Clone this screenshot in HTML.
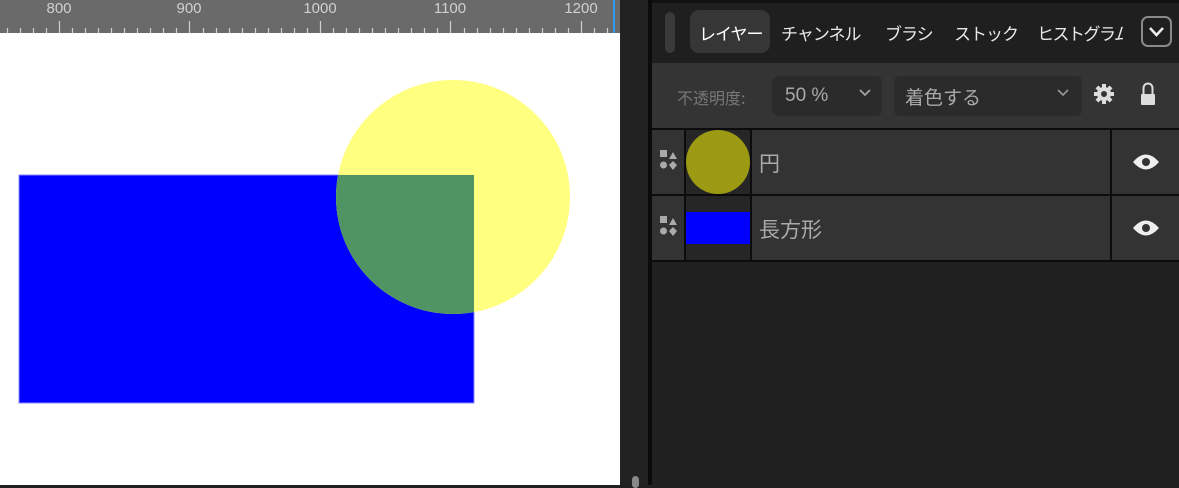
<!DOCTYPE html>
<html><head><meta charset="utf-8"><style>
*{margin:0;padding:0;box-sizing:border-box}
body{width:1179px;height:485px;overflow:hidden;background:#202020;position:relative;font-family:"Liberation Sans","Noto Sans CJK JP",sans-serif}
.a{position:absolute}
.jp{font-family:"Noto Sans CJK JP",sans-serif}
</style></head><body>
<div class="a" style="left:0;top:0;width:620px;height:485px;background:#fff"></div>
<div class="a" style="left:0;top:0;width:620px;height:33px;background:#6a6a6a"></div>
<svg class="a" style="left:0;top:0" width="620" height="33">
<g fill="#d0d0d0" font-size="15" text-anchor="middle" font-family="Liberation Sans">
<text x="59" y="13">800</text><text x="189" y="13">900</text><text x="320" y="13">1000</text><text x="450" y="13">1100</text><text x="581" y="13">1200</text></g>
<path stroke="#d0d0d0" stroke-width="1.2" fill="none" d="M7.5 28V33M20.5 28V33M33.5 28V33M46.5 28V33M59.5 21V33M72.5 28V33M85.5 28V33M98.5 28V33M111.5 28V33M124.5 28V33M137.5 28V33M150.5 28V33M163.5 28V33M176.5 28V33M189.5 21V33M203.5 28V33M216.5 28V33M229.5 28V33M242.5 28V33M255.5 28V33M268.5 28V33M281.5 28V33M294.5 28V33M307.5 28V33M320.5 21V33M333.5 28V33M346.5 28V33M359.5 28V33M372.5 28V33M385.5 28V33M398.5 28V33M411.5 28V33M424.5 28V33M437.5 28V33M450.5 21V33M464.5 28V33M477.5 28V33M490.5 28V33M503.5 28V33M516.5 28V33M529.5 28V33M542.5 28V33M555.5 28V33M568.5 28V33M581.5 21V33M594.5 28V33M607.5 28V33"/>
<rect x="613" y="0" width="2" height="33" fill="#2e9af0"/>
</svg>
<svg class="a" style="left:0;top:33px" width="620" height="452">
<defs><clipPath id="c"><rect x="19" y="142" width="455" height="228"/></clipPath></defs>
<rect x="19" y="142" width="455" height="228" fill="#0000ff" stroke="#8888ff" stroke-width="1"/>
<circle cx="453" cy="164" r="117" fill="#ffff80"/>
<circle cx="453" cy="164" r="117" fill="#4f9462" clip-path="url(#c)"/>
</svg>
<div class="a" style="left:620px;top:0;width:28px;height:485px;background:#222"></div>
<div class="a" style="left:648px;top:0;width:4px;height:485px;background:#0b0b0b"></div>
<div class="a" style="left:632px;top:476px;width:7px;height:12px;border-radius:4px;background:#888"></div>
<div class="a" style="left:652px;top:0;width:527px;height:3px;background:#111"></div>
<div class="a" style="left:652px;top:3px;width:527px;height:60px;background:#1f1f1f"></div>
<div class="a" style="left:665px;top:12px;width:10px;height:41px;border-radius:5px;background:#3a3a3a"></div>
<div class="a" style="left:690px;top:10px;width:80px;height:43px;border-radius:9px;background:#363636"></div>
<div class="a jp" style="left:699px;top:20px;font-size:17px;color:#fff;letter-spacing:-1px">レイヤー</div>
<div class="a jp" style="left:781px;top:20px;font-size:17px;color:#e8e8e8;letter-spacing:-1px;white-space:nowrap">チャンネル</div>
<div class="a jp" style="left:885px;top:20px;font-size:17px;color:#e8e8e8;letter-spacing:-1px">ブラシ</div>
<div class="a jp" style="left:954px;top:20px;font-size:17px;color:#e8e8e8;letter-spacing:-1px">ストック</div>
<div class="a jp" style="left:1037px;top:20px;font-size:17px;color:#e8e8e8;letter-spacing:-1.5px;width:86px;overflow:hidden;white-space:nowrap">ヒストグラム</div>
<div class="a" style="left:1141px;top:16px;width:31px;height:31px;border:2px solid #8a8a8a;border-radius:7px;background:#1f1f1f"></div>
<svg class="a" style="left:1141px;top:16px" width="31" height="31"><path d="M9 12 L15.5 19 L22 12" fill="none" stroke="#eee" stroke-width="2.5"/></svg>
<div class="a" style="left:652px;top:63px;width:527px;height:65px;background:#343434"></div>
<div class="a jp" style="left:677px;top:85px;font-size:16px;color:#777">不透明度:</div>
<div class="a" style="left:772px;top:76px;width:110px;height:40px;border-radius:6px;background:#2b2b2b"></div>
<div class="a" style="left:785px;top:85px;font-size:19px;color:#aaa">50 %</div>
<svg class="a" style="left:858px;top:88px" width="14" height="10"><path d="M2 2 L7 7 L12 2" fill="none" stroke="#aaa" stroke-width="1.6"/></svg>
<div class="a" style="left:894px;top:76px;width:188px;height:40px;border-radius:6px;background:#2b2b2b"></div>
<div class="a jp" style="left:905px;top:83px;font-size:19px;color:#aaa">着色する</div>
<svg class="a" style="left:1056px;top:88px" width="14" height="10"><path d="M2 2 L7 7 L12 2" fill="none" stroke="#999" stroke-width="1.6"/></svg>
<svg class="a" style="left:1093px;top:83px" width="22" height="22" viewBox="0 0 22 22"><g fill="#ddd"><circle cx="11" cy="11" r="7"/><g id="tt"><rect x="9" y="1" width="4" height="5"/><rect x="9" y="16" width="4" height="5"/><rect x="1" y="9" width="5" height="4"/><rect x="16" y="9" width="5" height="4"/></g><use href="#tt" transform="rotate(45 11 11)"/></g><circle cx="11" cy="11" r="3" fill="#343434"/></svg>
<svg class="a" style="left:1139px;top:81px" width="18" height="26"><path d="M4.5 13 V7 A4.5 4.5 0 0 1 13.5 7 V13" fill="none" stroke="#ddd" stroke-width="2"/><rect x="2" y="13" width="14" height="11" rx="1" fill="#ddd"/></svg>
<div class="a" style="left:652px;top:128px;width:527px;height:134px;background:#0c0c0c"></div>
<div class="a" style="left:652px;top:130px;width:32px;height:64px;background:#333"></div>
<div class="a" style="left:686px;top:130px;width:64px;height:64px;background:#262626"></div>
<div class="a" style="left:752px;top:130px;width:358px;height:64px;background:#333"></div>
<div class="a" style="left:1112px;top:130px;width:67px;height:64px;background:#333"></div>
<div class="a" style="left:652px;top:196px;width:32px;height:64px;background:#333"></div>
<div class="a" style="left:686px;top:196px;width:64px;height:64px;background:#262626"></div>
<div class="a" style="left:752px;top:196px;width:358px;height:64px;background:#333"></div>
<div class="a" style="left:1112px;top:196px;width:67px;height:64px;background:#333"></div>
<div class="a" style="left:686px;top:130px;width:64px;height:64px;border-radius:50%;background:#9c9a12"></div>
<div class="a" style="left:686px;top:212px;width:64px;height:32px;background:#0000ff"></div>
<div class="a jp" style="left:759px;top:148px;font-size:21px;color:#aaa">円</div>
<div class="a jp" style="left:759px;top:214px;font-size:21px;color:#aaa">長方形</div>
<svg class="a" style="left:659px;top:150px" width="20" height="24"><g fill="#aaa"><rect x="1" y="0" width="7" height="7"/><path d="M14 2 L18 9 L10 9Z"/><circle cx="4.5" cy="15" r="3.5"/><path d="M14 11 L18 15 L14 20 L10 15Z"/></g></svg>
<svg class="a" style="left:659px;top:216px" width="20" height="24"><g fill="#aaa"><rect x="1" y="0" width="7" height="7"/><path d="M14 2 L18 9 L10 9Z"/><circle cx="4.5" cy="15" r="3.5"/><path d="M14 11 L18 15 L14 20 L10 15Z"/></g></svg>
<svg class="a" style="left:1131px;top:151px" width="30" height="22"><path d="M2 11 Q15 -4 28 11 Q15 26 2 11Z" fill="#eee"/><circle cx="15" cy="11" r="4" fill="#333"/></svg>
<svg class="a" style="left:1131px;top:217px" width="30" height="22"><path d="M2 11 Q15 -4 28 11 Q15 26 2 11Z" fill="#eee"/><circle cx="15" cy="11" r="4" fill="#333"/></svg>
</body></html>
